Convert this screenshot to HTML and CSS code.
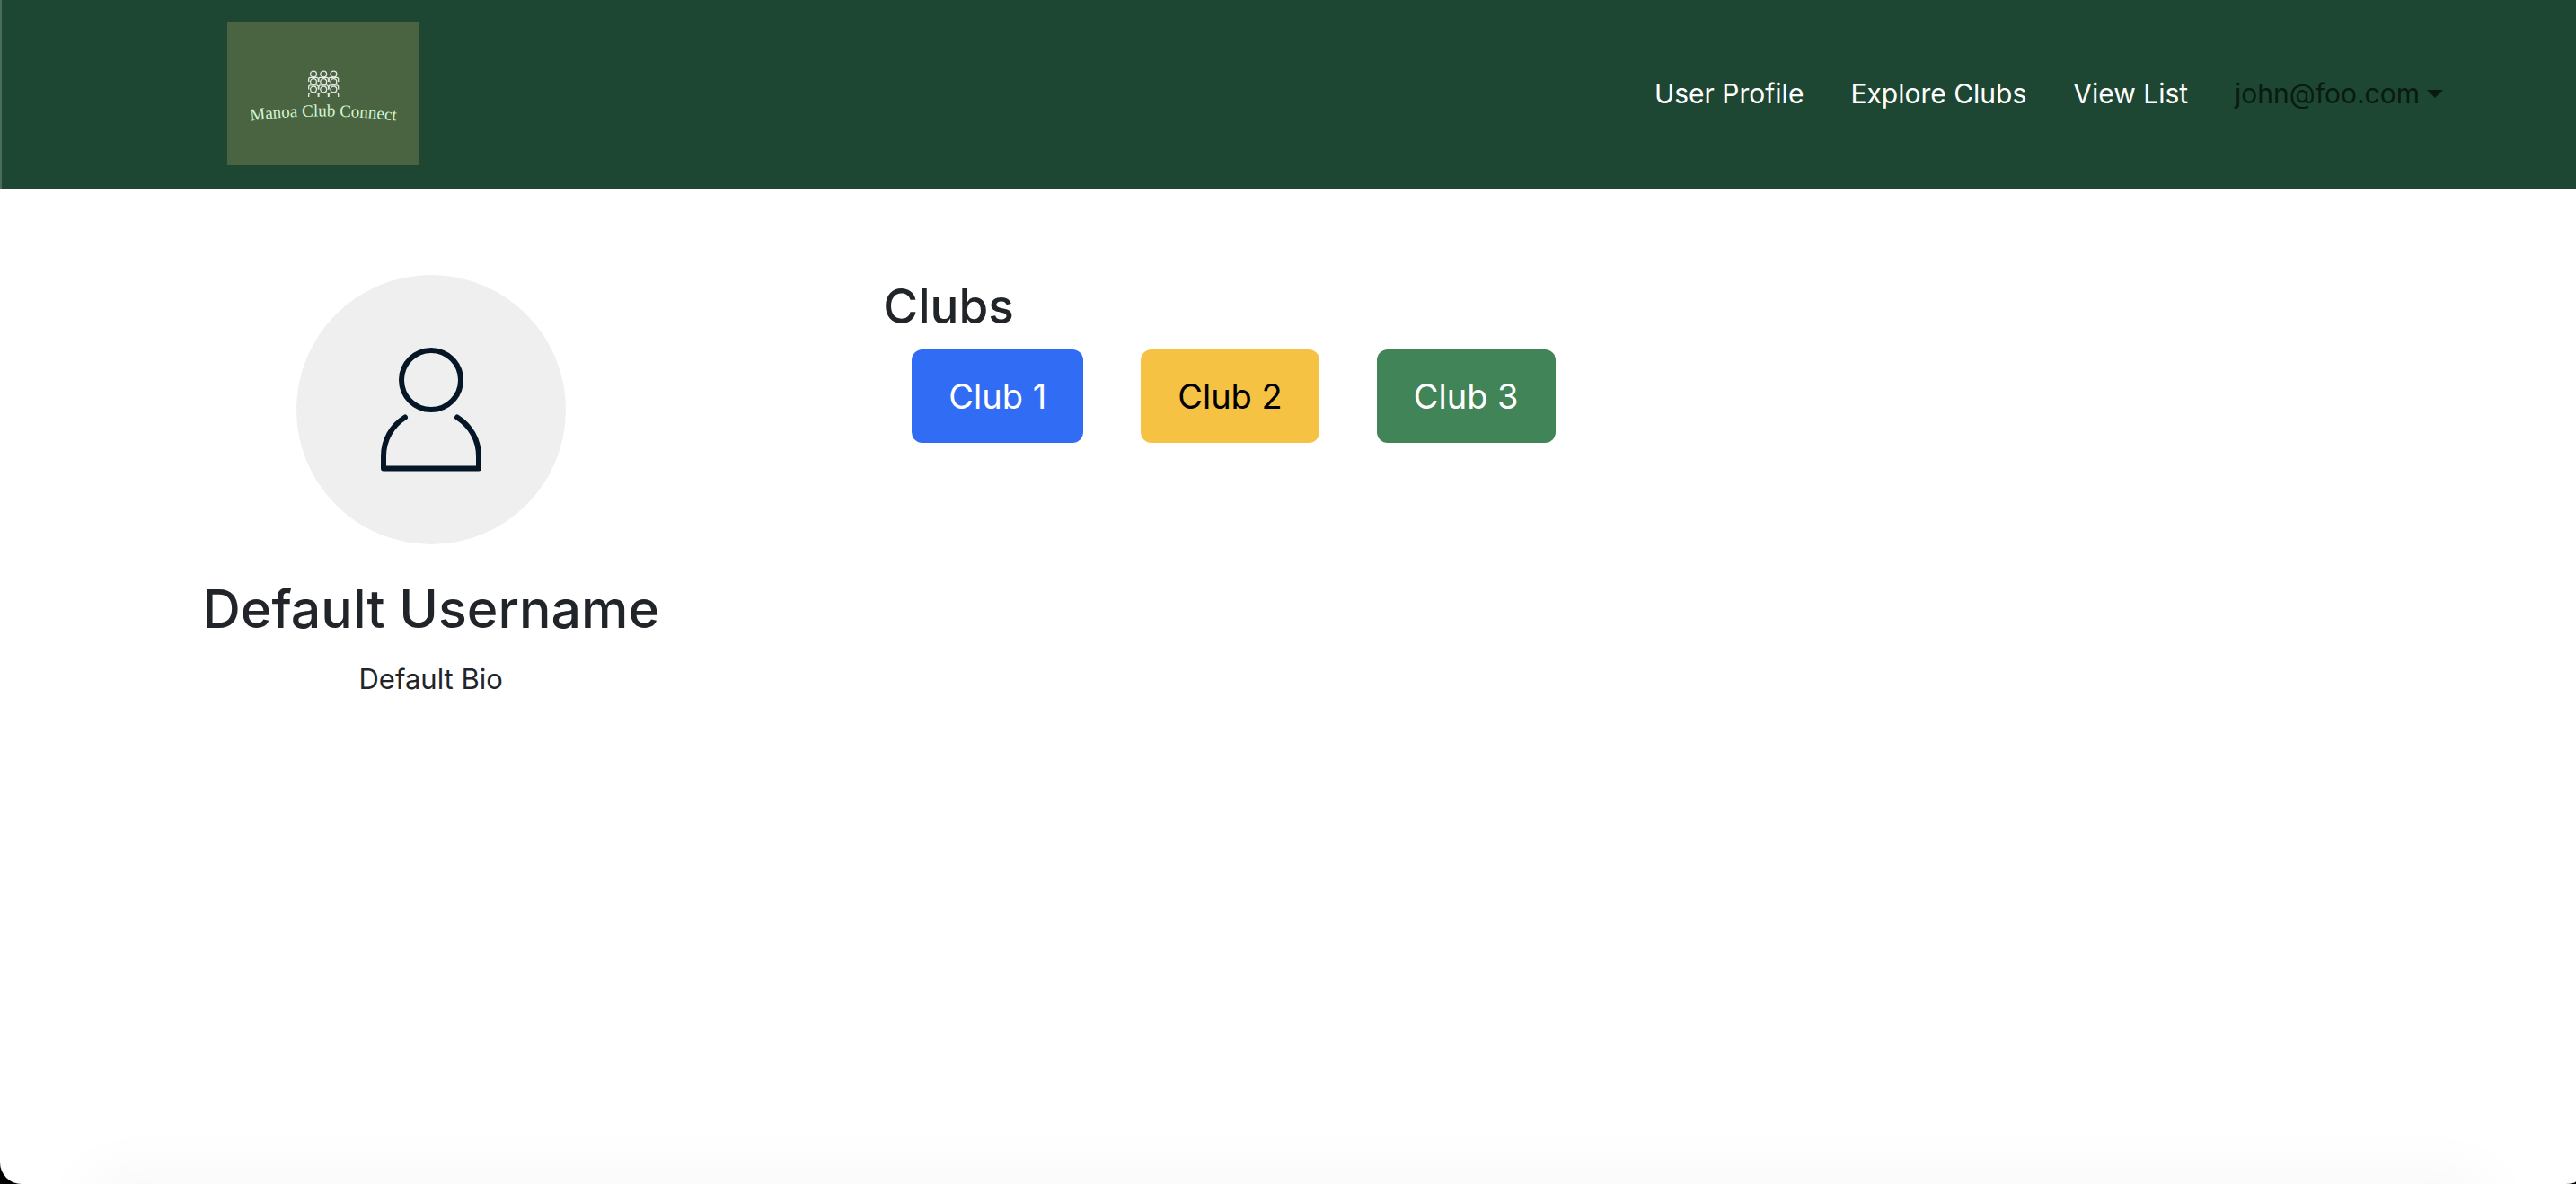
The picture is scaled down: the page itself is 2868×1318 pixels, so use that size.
FILE: index.html
```html
<!DOCTYPE html>
<html lang="en">
<head>
<meta charset="utf-8">
<title>Manoa Club Connect</title>
<link rel="stylesheet" href="styles.css">
</head>
<body>
<div class="window">
  <header class="navbar">
    <a class="brand" href="#" aria-label="Manoa Club Connect">
      <svg class="logo" viewBox="0 0 214 160">
        <defs>
          <path id="arc" d="M14 112Q107 99 200 112"/>
          <g id="member">
            <circle cx="6" cy="4.500" r="3.400"/>
            <path d="M.7 13V10.200Q.7 8.300 2.600 8.300H9.400Q11.300 8.300 11.300 10.200V13"/>
          </g>
          <g id="bench">
            <use href="#member"/>
            <use href="#member" x="11.200"/>
            <use href="#member" x="22.400"/>
          </g>
        </defs>
        <g class="logo-people">
          <use href="#bench" x="90" y="54"/>
          <use href="#bench" x="90" y="62.500"/>
          <use href="#bench" x="90" y="71"/>
        </g>
        <text class="logo-text"><textPath href="#arc" startOffset="50%" text-anchor="middle">Manoa Club Connect</textPath></text>
      </svg>
    </a>
    <nav class="links">
      <a class="link" href="#">User Profile</a>
      <a class="link" href="#">Explore Clubs</a>
      <a class="link" href="#">View List</a>
      <button class="link account" type="button">john@foo.com<span class="caret"></span></button>
    </nav>
  </header>
  <main class="content">
    <section class="profile">
      <svg class="avatar" viewBox="0 0 300 300" role="img" aria-label="Profile picture">
        <circle class="avatar-bg" cx="150" cy="150" r="150"/>
        <g class="avatar-lines">
          <circle cx="150" cy="117" r="33"/>
          <path d="M121 158.500C106 168 97 184 97 202V215.500H203V202C203 184 194 168 179 158.500"/>
        </g>
      </svg>
      <h1 class="username">Default Username</h1>
      <p class="bio">Default Bio</p>
    </section>
    <section class="clubs">
      <h2 class="clubs-title">Clubs</h2>
      <div class="club-list">
        <button class="club blue" type="button">Club 1</button>
        <button class="club yellow" type="button">Club 2</button>
        <button class="club green" type="button">Club 3</button>
      </div>
    </section>
  </main>
  <div class="dock-shade"></div>
</div>
</body>
</html>
```
FILE: styles.css
```css
* { box-sizing: border-box; }

html { background: #000; }

body {
  margin: 0;
  font-family: Inter, "Liberation Sans", sans-serif;
  font-size: 31px;
  line-height: 48px;
  color: #212529;
}

.window {
  position: relative;
  min-height: 100vh;
  overflow: hidden;
  background: #fff;
  border-radius: 0 0 12px 24px / 0 0 3px 24px;
}

.navbar {
  display: flex;
  align-items: center;
  justify-content: space-between;
  height: 210px;
  padding: 0 132px 2px 251px;
  background: #1d4633;
  border-left: 2px solid #4b6b5d;
}

.brand { display: block; }

.logo {
  display: block;
  width: 214px;
  height: 160px;
  background: #4a6441;
}

.logo-people {
  fill: none;
  stroke: #e6ebe4;
  stroke-width: 1.3;
}

.logo-text {
  fill: #d2f5d3;
  font-family: "Liberation Serif", serif;
  font-size: 19px;
}

.links {
  display: flex;
  gap: 20px;
}

.link {
  padding: 16px;
  color: #fff;
  font: inherit;
  font-size: 30px;
  text-decoration: none;
}

.account {
  display: flex;
  align-items: center;
  gap: 8px;
  border: 0;
  background: none;
  color: #081a11;
}

.caret {
  border: 9px solid transparent;
  border-top-color: currentColor;
  border-bottom: 0;
}

.content {
  display: grid;
  grid-template-columns: 1fr 2fr;
  padding: 96px 0 96px 2px;
}

.profile {
  display: flex;
  flex-direction: column;
  align-items: center;
  padding: 0 24px;
}

.avatar {
  width: 300px;
  height: 300px;
}

.avatar-bg { fill: #efefef; }

.avatar-lines {
  fill: none;
  stroke: #051626;
  stroke-width: 6;
  stroke-linecap: round;
  stroke-linejoin: round;
}

.username {
  margin: 34px 0 16px;
  font-size: 59px;
  font-weight: 500;
  line-height: 76px;
}

.bio { margin: 0; }

.clubs { padding: 0 26px; }

.clubs-title {
  margin: 0 0 13px;
  font-size: 53px;
  font-weight: 500;
  line-height: 70px;
}

.club-list {
  display: flex;
  gap: 64px;
  padding: 0 32px;
}

.club {
  height: 104px;
  padding: 0 41px;
  border: 0;
  border-radius: 12px;
  font: inherit;
  font-size: 38px;
  color: #fff;
}

.blue { background: #316cf4; }
.yellow { background: #f5c244; color: #000; }
.green { background: #418457; }

.dock-shade {
  position: absolute;
  right: 100px;
  bottom: -40px;
  left: 100px;
  height: 40px;
  box-shadow: 0 0 72px rgba(0, 0, 0, 0.06);
}
```
